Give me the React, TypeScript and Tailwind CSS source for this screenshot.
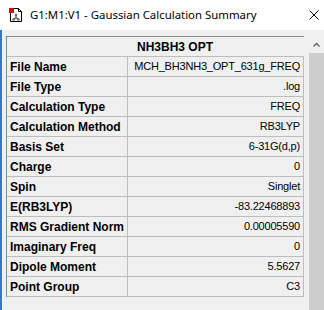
const rows: [string, string][] = [
  ["File Name", "MCH_BH3NH3_OPT_631g_FREQ"],
  ["File Type", ".log"],
  ["Calculation Type", "FREQ"],
  ["Calculation Method", "RB3LYP"],
  ["Basis Set", "6-31G(d,p)"],
  ["Charge", "0"],
  ["Spin", "Singlet"],
  ["E(RB3LYP)", "-83.22468893"],
  ["RMS Gradient Norm", "0.00005590"],
  ["Imaginary Freq", "0"],
  ["Dipole Moment", "5.5627"],
  ["Point Group", "C3"],
];

const AppIcon = () => (
  <svg width="16" height="16" viewBox="0 0 16 16" className="shrink-0">
    <path d="M2.5 1.5h8l3 3v10h-11z" fill="#fff" stroke="#000" />
    <path d="M10.5 1.5v3h3" fill="none" stroke="#000" />
    <rect x="1" y="1" width="5" height="5" fill="#e00000" />
    <path d="M8 8v2.5M8 10.5l-2.5 2M8 10.5l2.5 2" stroke="#555" strokeWidth="1.2" fill="none" />
    <circle cx="8" cy="8" r="1.2" fill="#666" />
    <circle cx="5.5" cy="12.5" r="1.2" fill="#666" />
    <circle cx="10.5" cy="12.5" r="1.2" fill="#666" />
  </svg>
);

export default function App() {
  return (
    <div className="w-[324px] h-[310px] overflow-hidden bg-white flex flex-col">
      <div className="h-[30px] shrink-0 flex items-center pl-[8px] pr-[5px]">
        <AppIcon />
        <span className="ml-[6px] text-[11.4px] text-black font-['Noto_Sans',sans-serif] leading-none">
          G1:M1:V1 - Gaussian Calculation Summary
        </span>
        <svg width="10" height="10" viewBox="0 0 10 10" className="ml-auto">
          <path d="M0.5 0.5l9 9M9.5 0.5l-9 9" stroke="#000" strokeWidth="1" />
        </svg>
      </div>
      <div className="flex-1 flex bg-[#f0f0f0] border-l-2 border-[#2b7ad6] pl-[4px] pt-[6px] font-['Liberation_Sans',Arial,sans-serif]">
        <div className="w-[298px] self-start border-t border-l border-[#8a8a8a]">
          <div className="h-[20px] border-b border-[#bdbdbd] flex items-center pl-[130px] text-[12px] font-bold text-black">
            NH3BH3 OPT
          </div>
          {rows.map(([k, v]) => (
            <div key={k} className="h-[20px] flex border-b border-[#bdbdbd]">
              <div className="w-[121px] border-r border-[#bdbdbd] flex items-center pl-[3px] text-[12px] font-bold text-black whitespace-nowrap">
                {k}
              </div>
              <div className="w-[176px] border-r border-[#bdbdbd] flex items-center justify-end pr-[3px] text-[11px] tracking-[-0.2px] text-black whitespace-nowrap">
                {v}
              </div>
            </div>
          ))}
        </div>
        <div className="ml-[5px] w-[17px] flex flex-col">
          <div className="h-[17px] flex items-center justify-center">
            <svg width="7" height="5" viewBox="0 0 7 5">
              <path d="M0.5 4.5l3-3 3 3" stroke="#606060" strokeWidth="1.3" fill="none" />
            </svg>
          </div>
          <div className="flex-1 bg-[#cdcdcd]" />
        </div>
      </div>
    </div>
  );
}
